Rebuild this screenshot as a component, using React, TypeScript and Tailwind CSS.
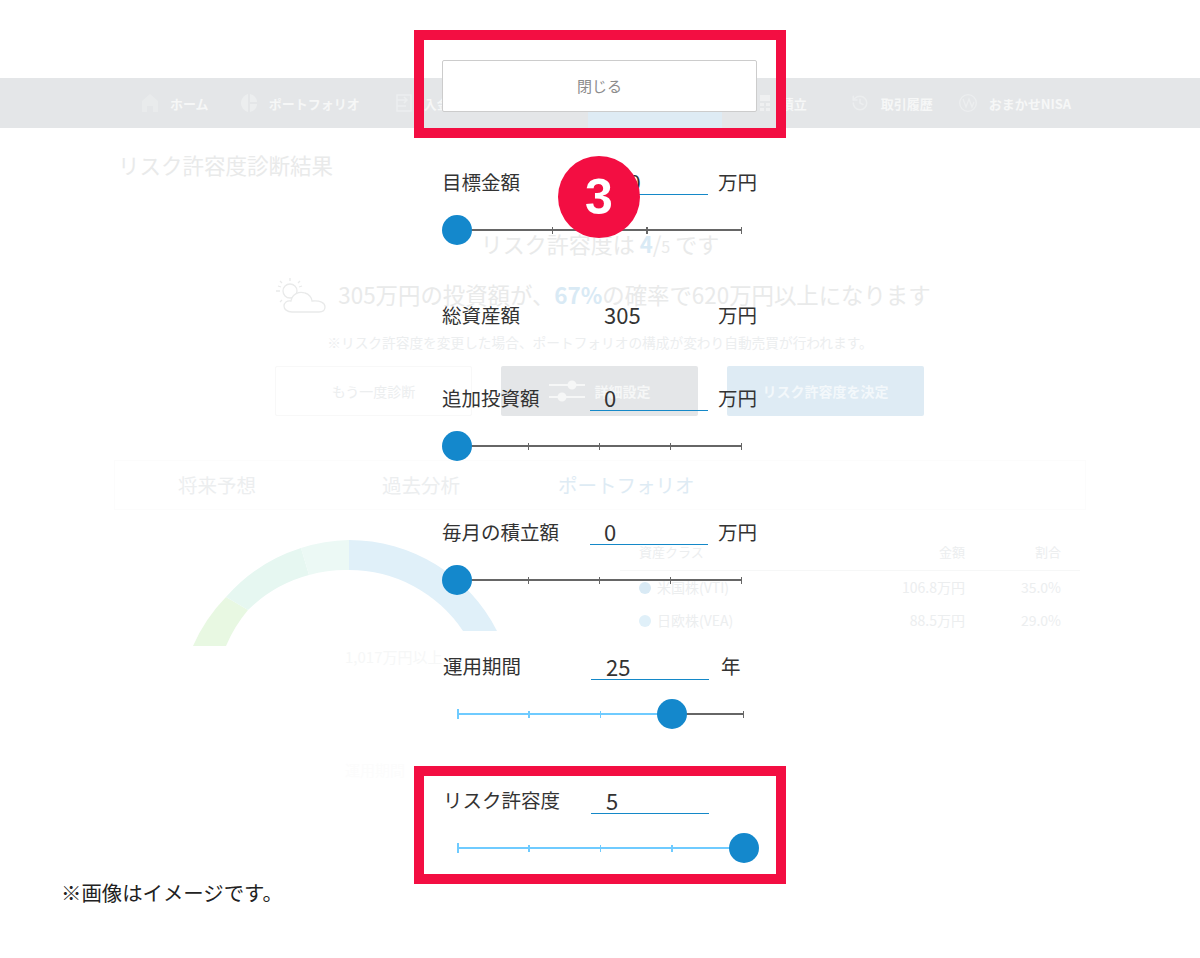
import { History } from "lucide-react";

const font = { fontFamily: '"Noto Sans CJK JP", "Noto Sans", sans-serif' };

function NavItem({ icon, label, className }: { icon: React.ReactNode; label: string; className: string }) {
  return (
    <div className={`flex shrink-0 items-center whitespace-nowrap text-[13px] font-bold text-[#f6f7f7] ${className}`}>
      {icon}
      <span className="mt-[1px]">{label}</span>
    </div>
  );
}

function HomeIcon() {
  return (
    <svg width="16" height="18" viewBox="0 0 16 18" className="mr-[12px]" fill="#e9ebec">
      <path d="M8 0 16 7v11h-5v-6H5v6H0V7Z" />
    </svg>
  );
}

function PortfolioIcon() {
  return (
    <svg width="16" height="18" viewBox="0 0 16 18" className="mr-[12px]" fill="#eceeef">
      <path d="M7 0v18C3 17 0 13 0 9s3-8 7-9Z" />
      <path d="M9 0c4 1 7 4 7 8H9Z" />
      <path d="M9 10h7c0 4-3 7-7 8Z" />
    </svg>
  );
}

function DepositIcon() {
  return (
    <svg width="16" height="18" viewBox="0 0 16 18" className="mr-[12px]" fill="none" stroke="#eceeef" strokeWidth="1.5">
      <path d="M1 1h14v16H1Z" />
      <path d="M1 6h9M1 12h9M8 3l3 3-3 3" />
    </svg>
  );
}

function GridIcon() {
  return (
    <svg width="10" height="16" viewBox="0 0 10 16" className="mr-[11px]" fill="#eff0f1">
      <path d="M0 0h10v6H0ZM0 8h4v3H0ZM6 8h4v3H6ZM0 13h4v3H0ZM6 13h4v3H6Z" />
    </svg>
  );
}

function NisaIcon() {
  return (
    <svg width="18" height="18" viewBox="0 0 18 18" className="mr-[12px]" fill="none" stroke="#eceeef" strokeWidth="1.3">
      <circle cx="9" cy="9" r="8.3" />
      <path d="M4 5l3 8 3-8 3 8 2-5" />
    </svg>
  );
}

function Gauge() {
  return (
    <svg width="310" height="110" viewBox="190 540 310 110" className="shrink-0">
      <path d="M193 646 A166 166 0 0 1 226 597 L248 610 A139 139 0 0 0 226 646 Z" fill="#e8f8e2" />
      <path d="M226 597 A166 166 0 0 1 301 548 L309 575 A137 137 0 0 0 248 610 Z" fill="#e6f7f1" />
      <path d="M301 548 A166 166 0 0 1 349 540 L349 570 A137 137 0 0 0 309 575 Z" fill="#ecf9f5" />
      <path d="M349 540 A166 166 0 0 1 497 631 L463 631 A137 137 0 0 0 349 570 Z" fill="#e0f0f9" />
    </svg>
  );
}

function TableRow({ color, name, amount, pct }: { color: string; name: string; amount: string; pct: string }) {
  return (
    <div className="flex h-[33px] items-center px-[19px] text-[14px] text-[#eceeef]">
      <span className={`mr-[6px] h-[12px] w-[12px] rounded-full ${color}`} />
      <span className="flex-1">{name}</span>
      <span className="w-[100px] text-right">{amount}</span>
      <span className="w-[96px] text-right">{pct}</span>
    </div>
  );
}

function FieldRow({
  label,
  value,
  unit,
  underline = true,
  shift = false,
  className,
}: {
  label: string;
  value: string;
  unit?: string;
  underline?: boolean;
  shift?: boolean;
  className: string;
}) {
  return (
    <div className={`flex h-[30px] items-end text-[19.5px] leading-[22px] text-[#333] ${className}`}>
      <span className={shift ? "mb-[3px] w-[149px] whitespace-nowrap pl-[1px]" : "mb-[2px] w-[148px] whitespace-nowrap"}>{label}</span>
      <span
        className={`h-[30px] w-[118px] pt-[5px] text-[22px] ${shift ? "pl-[15px]" : "pl-[14px]"} ${underline ? "border-b border-[#1488c8]" : ""}`}
      >
        {value}
      </span>
      {unit ? <span className={shift ? "mb-[3px] ml-[12px]" : "mb-[2px] ml-[10px]"}>{unit}</span> : null}
    </div>
  );
}

function Slider({
  ticks,
  percent,
  wide = false,
  className,
}: {
  ticks: number;
  percent: number;
  wide?: boolean;
  className: string;
}) {
  return (
    <div className={`relative ml-[15px] h-[30px] ${wide ? "w-[287px]" : "w-[285px]"} ${className}`}>
      <div className="absolute left-0 right-0 top-[14px] h-[2px] bg-[#666]" />
      <div className="absolute left-0 top-[14px] h-[2px] bg-[#6fcbff]" style={{ width: `${percent}%` }} />
      <div className="absolute inset-x-0 top-[10px] flex h-[10px] items-center justify-between">
        {Array.from({ length: ticks }, (_, i) => {
          const lit = percent > 0 && (i / (ticks - 1)) * 100 <= percent;
          return (
            <span
              key={i}
              className={`w-[1.5px] ${lit ? "bg-[#6fcbff]" : "bg-[#666]"} ${lit && i === 0 ? "h-[10px]" : "h-[7px]"}`}
            />
          );
        })}
      </div>
      <div className="absolute top-0 h-[30px] w-[30px] -translate-x-1/2 rounded-full bg-[#1488cc]" style={{ left: `${percent}%` }} />
    </div>
  );
}

export default function App() {
  return (
    <div className="relative h-[958px] w-[1200px] overflow-hidden bg-white" style={font}>
      {/* faded page behind the form */}
      <div className="pt-[78px]">
        <nav className="flex h-[50px] items-center bg-[#e4e6e8] pl-[142px]">
          <NavItem icon={<HomeIcon />} label="ホーム" className="" />
          <NavItem icon={<PortfolioIcon />} label="ポートフォリオ" className="ml-[32px]" />
          <NavItem icon={<DepositIcon />} label="入金・出金" className="ml-[36px]" />
          <div className="ml-[99px] h-[50px] w-[134px] shrink-0 bg-[#deebf4]" />
          <NavItem icon={<GridIcon />} label="積立" className="ml-[38px]" />
          <NavItem icon={<History className="mr-[12px] h-[18px] w-[18px] text-[#eceeef]" />} label="取引履歴" className="ml-[44px]" />
          <NavItem icon={<NisaIcon />} label="おまかせNISA" className="ml-[26px]" />
        </nav>

        <h1 className="ml-[118px] mt-[22px] text-[21.5px] font-normal leading-[30px] text-[#e9eaea]">リスク許容度診断結果</h1>
        <p className="mt-[48px] text-center text-[22px] leading-[30px] text-[#e9eaea]">
          リスク許容度は <span className="font-bold text-[#d9eaf5]">4</span>/<span className="text-[16px]">5</span> です
        </p>

        <div className="ml-[6px] mt-[17px] flex h-[34px] items-center justify-center text-[22.4px] text-[#e9eaea]">
          <svg width="55" height="36" viewBox="0 0 55 36" fill="none" stroke="#e9eaea" strokeWidth="1.3" className="mr-[8px]">
            <circle cx="15" cy="14" r="7" />
            <path d="M15 1v3M5 4l2 2M1 14h4M5 25l2-2M25 4l-2 2M3 9l3 1M27 9l-3 1" />
            <path d="M17 35c-5 0-8-3-8-6s3-6 7-5c1-7 8-10 14-8 4 1 7 5 7 8 8-1 13 2 13 6s-3 5-6 5Z" fill="#fff" />
          </svg>
          <span>
            305万円の投資額が、<span className="font-bold text-[#d9eaf5]">67%</span>の確率で620万円以上になります
          </span>
        </div>

        <p className="mt-[20px] text-center text-[13.7px] leading-[20px] text-[#eceeef]">
          ※リスク許容度を変更した場合、ポートフォリオの構成が変わり自動売買が行われます。
        </p>

        <div className="ml-[275px] mt-[14px] flex gap-[29px] text-[14px]">
          <div className="flex h-[50px] w-[197px] items-center justify-center rounded-[2px] border border-[#f8f8f8] text-[#eceeef]">もう一度診断</div>
          <div className="flex h-[50px] w-[197px] items-center justify-center gap-[10px] rounded-[2px] bg-[#e4e6e8] font-bold text-[#f6f7f7]">
            <svg width="36" height="22" viewBox="0 0 36 22" fill="#f6f7f7" stroke="#f6f7f7" strokeWidth="2">
              <path d="M0 5h36M0 17h36" />
              <circle cx="23" cy="5" r="3.5" />
              <circle cx="13" cy="17" r="3.5" />
            </svg>
            詳細設定
          </div>
          <div className="flex h-[50px] w-[197px] items-center justify-center rounded-[2px] bg-[#deebf4] font-bold text-[#f3f8fb]">リスク許容度を決定</div>
        </div>

        <div className="ml-[114px] mt-[44px] flex h-[50px] w-[972px] items-center border border-[#fcfcfc] text-[19.5px] text-[#eceeef]">
          <span className="ml-[63px] w-[204px]">将来予想</span>
          <span className="w-[176px]">過去分析</span>
          <span className="text-[#deebf4]">ポートフォリオ</span>
        </div>

        <div className="mt-[30px] flex">
          <div className="relative ml-[190px] h-[130px]">
            <Gauge />
            <span className="absolute left-[155px] top-[106px] whitespace-nowrap text-[15px] text-[#f6f7f7]">1,017万円以上</span>
          </div>
          <div className="ml-[120px] w-[460px]">
            <div className="flex h-[31px] items-start border-b border-[#f6f7f7] px-[19px] pt-[2px] text-[13px] text-[#eceeef]">
              <span className="flex-1">資産クラス</span>
              <span className="w-[100px] text-right">金額</span>
              <span className="w-[96px] text-right">割合</span>
            </div>
            <TableRow color="bg-[#d9eaf5]" name="米国株(VTI)" amount="106.8万円" pct="35.0%" />
            <TableRow color="bg-[#e0f0f9]" name="日欧株(VEA)" amount="88.5万円" pct="29.0%" />
          </div>
        </div>

        <p className="ml-[345px] mt-[90px] text-[15px] leading-[20px] text-[#fcfcfc]">運用期間</p>
        <p className="ml-[61px] mt-[99px] text-[20.4px] leading-[26px] text-[#222]">※画像はイメージです。</p>
      </div>

      {/* settings form over the page */}
      <div className="absolute left-[442px] top-[60px] flex w-[315px] flex-col">
        <button type="button" className="h-[52px] w-full rounded-[2px] border border-[#ccc] bg-white text-[15px] text-[#8c8c8c]">
          閉じる
        </button>
        <FieldRow label="目標金額" value="620" unit="万円" className="mt-[53px]" />
        <Slider ticks={4} percent={0} className="mt-[20px]" />
        <FieldRow label="総資産額" value="305" unit="万円" underline={false} className="mt-[53px]" />
        <FieldRow label="追加投資額" value="0" unit="万円" className="mt-[53px]" />
        <Slider ticks={5} percent={0} className="mt-[20px]" />
        <FieldRow label="毎月の積立額" value="0" unit="万円" className="mt-[54px]" />
        <Slider ticks={5} percent={0} className="mt-[20px]" />
        <FieldRow label="運用期間" value="25" unit="年" shift className="mt-[55px]" />
        <Slider ticks={5} percent={75} wide className="mt-[19px]" />
        <FieldRow label="リスク許容度" value="5" shift className="mt-[55px]" />
        <Slider ticks={5} percent={100} wide className="mt-[19px]" />
      </div>

      {/* call-out marks */}
      <div className="absolute left-[414px] top-[30px] h-[108px] w-[372px] border-[10px] border-[#f30e42]" />
      <div className="absolute left-[414px] top-[766px] h-[118px] w-[372px] border-[10px] border-[#f30e42]" />
      <div className="absolute left-[558px] top-[156px] flex h-[82px] w-[82px] items-center justify-center rounded-full bg-[#f30e42] font-['Liberation_Sans',sans-serif] text-[50px] font-bold text-white">
        3
      </div>
    </div>
  );
}
